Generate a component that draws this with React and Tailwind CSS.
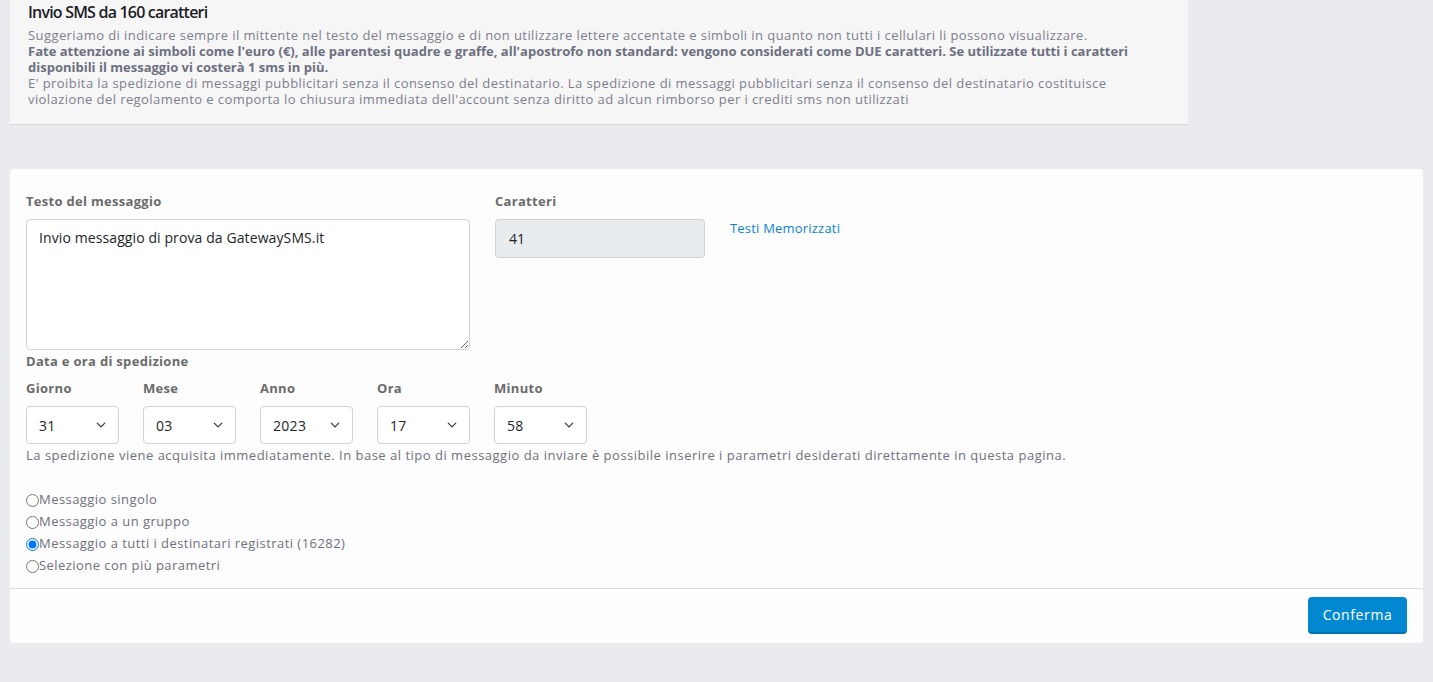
import React from "react";

const FONT = { fontFamily: '"Open Sans", "Noto Sans", Arial, sans-serif' };

function Chevron() {
  return (
    <svg width="10" height="10" viewBox="0 0 16 16" className="absolute right-[13px] top-1/2 -translate-y-1/2 pointer-events-none">
      <path d="M2 5l6 6 6-6" fill="none" stroke="#343a40" strokeWidth="2" strokeLinecap="round" strokeLinejoin="round" />
    </svg>
  );
}

function FieldLabel({ children, className = "" }) {
  return (
    <div className={`text-[13px] font-bold text-[#6b6b6b] leading-[16px] tracking-[0.3px] ${className}`}>
      {children}
    </div>
  );
}

function DateSelect({ label, value }) {
  return (
    <div className="flex flex-col w-[93px]">
      <FieldLabel className="h-[16px]">{label}</FieldLabel>
      <div className="relative mt-[10px]">
        <select
          defaultValue={value}
          className="appearance-none w-[93px] h-[38px] pl-[12px] pr-[28px] border border-[#ced4da] rounded-[4px] bg-white text-[14px] text-[#212529] tracking-[0.3px] outline-none"
          style={FONT}
        >
          <option value={value}>{value}</option>
        </select>
        <Chevron />
      </div>
    </div>
  );
}

function Radio({ label, checked }) {
  return (
    <label className="flex items-center h-[22px] text-[13px] tracking-[0.45px] text-[#6f7080]">
      <input type="radio" name="dest" defaultChecked={checked} className="m-0 w-[13px] h-[13px]" />
      <span>{label}</span>
    </label>
  );
}

export default function App() {
  return (
    <div className="min-h-[682px] bg-[#eaebef] pb-[39px]" style={FONT}>
      <div className="ml-[10px] w-[1178px] bg-[#f6f6f6] border-b border-[#d8d8d8] pl-[18px] pr-4 pt-[1px] pb-[17px]">
        <h1 className="text-[16px] font-semibold text-[#1d1d28] leading-[22px] tracking-[-0.8px] mb-[4px]">
          Invio SMS da 160 caratteri
        </h1>
        <div className="text-[13px] leading-[16px] text-[#7d7f8f] tracking-[0.42px]">
          <p>Suggeriamo di indicare sempre il mittente nel testo del messaggio e di non utilizzare lettere accentate e simboli in quanto non tutti i cellulari li possono visualizzare.</p>
          <p className="font-bold text-[#6d7080] tracking-normal">
            Fate attenzione ai simboli come l'euro (€), alle parentesi quadre e graffe, all'apostrofo non standard: vengono considerati come DUE caratteri. Se utilizzate tutti i caratteri disponibili il messaggio vi costerà 1 sms in più.
          </p>
          <p>E' proibita la spedizione di messaggi pubblicitari senza il consenso del destinatario. La spedizione di messaggi pubblicitari senza il consenso del destinatario costituisce violazione del regolamento e comporta lo chiusura immediata dell'account senza diritto ad alcun rimborso per i crediti sms non utilizzati</p>
        </div>
      </div>

      <div className="mx-[10px] mt-[44px] bg-[#fdfdfd] rounded-[4px]">
        <div className="px-4 pt-[24px] pb-[11px]">
          <div className="flex gap-[25px]">
            <div className="flex flex-col w-[444px]">
              <FieldLabel className="mb-[10px]">Testo del messaggio</FieldLabel>
              <textarea
                defaultValue="Invio messaggio di prova da GatewaySMS.it"
                className="w-[444px] h-[131px] border border-[#ced4da] rounded-[4px] bg-white px-[12px] py-[8px] text-[14px] leading-[20px] tracking-[0.1px] text-[#212529] outline-none"
                style={FONT}
              />
            </div>
            <div className="flex flex-col w-[210px]">
              <FieldLabel className="mb-[10px]">Caratteri</FieldLabel>
              <div className="h-[39px] bg-[#e9ecef] border border-[#ced4da] rounded-[4px] px-[13px] flex items-center text-[14px] text-[#212529]">41</div>
            </div>
            <div className="pt-[22px]">
              <a className="text-[13px] text-[#0b86cc] leading-[18px] tracking-[0.2px] cursor-pointer">Testi Memorizzati</a>
            </div>
          </div>

          <FieldLabel className="mt-[3px]">Data e ora di spedizione</FieldLabel>
          <div className="flex gap-[24px] mt-[11px]">
            <DateSelect label="Giorno" value="31" />
            <DateSelect label="Mese" value="03" />
            <DateSelect label="Anno" value="2023" />
            <DateSelect label="Ora" value="17" />
            <DateSelect label="Minuto" value="58" />
          </div>
          <p className="text-[13px] leading-[18px] tracking-[0.5px] text-[#6f7080] mt-[2px]">
            La spedizione viene acquisita immediatamente. In base al tipo di messaggio da inviare è possibile inserire i parametri desiderati direttamente in questa pagina.
          </p>

          <div className="flex flex-col mt-[25px]">
            <Radio label="Messaggio singolo" />
            <Radio label="Messaggio a un gruppo" />
            <Radio label="Messaggio a tutti i destinatari registrati (16282)" checked />
            <Radio label="Selezione con più parametri" />
          </div>
        </div>
        <div className="border-t border-[#dedede] flex justify-end px-4 pt-[8px] pb-[9px]">
          <button className="h-[37px] w-[99px] rounded-[4px] bg-[#0288d1] text-white text-[14px] tracking-[0.6px] border-b-2 border-[#0270ae]" style={FONT}>
            Conferma
          </button>
        </div>
      </div>
    </div>
  );
}
